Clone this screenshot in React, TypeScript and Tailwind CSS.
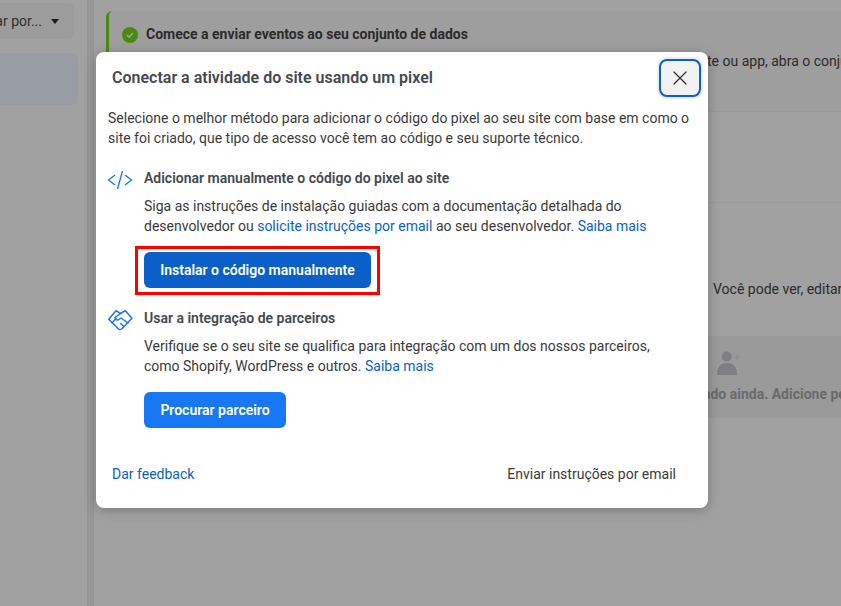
import React from 'react';
import { X } from 'lucide-react';

const font = { fontFamily: 'Roboto, sans-serif' };

function CodeIcon() {
  return (
    <svg width="26" height="20" viewBox="0 0 26 20" fill="none" stroke="#1877f2" strokeWidth="1.3" className="mt-[2px] shrink-0">
      <path d="M8 5 L1.5 10 L8 15" />
      <path d="M15.5 1 L10.5 19" />
      <path d="M18 5 L24.5 10 L18 15" />
    </svg>
  );
}

function HandshakeIcon() {
  return (
    <svg width="26" height="22" viewBox="0 0 26 22" fill="none" stroke="#1877f2" strokeWidth="1.5" strokeLinejoin="round" strokeLinecap="round" className="mt-px shrink-0">
      <path d="M1.7 10.3 L9 1.7 L13.5 4.5 L18.3 1.7 L25 9.3 L14.5 20 Q13 21 11.5 20 Z" />
      <path d="M13.5 4.5 L8 8.5 Q8 11.2 11 11 L14 9 L21 14" />
      <path d="M5 14 L9 9.5" />
      <path d="M17 17.5 L13.5 14.5" />
    </svg>
  );
}

function Background() {
  return (
    <div className="flex h-[606px] w-[841px] overflow-hidden bg-[#a1a1a1]" style={font}>
      <aside className="w-[87px] shrink-0">
        <div className="mt-[3px] flex h-9 w-[74px] items-center justify-end gap-[9px] overflow-hidden rounded-r-md bg-[#9c9c9c] pr-[15px] text-[14px] text-[#2f2f2f]">
          <span className="shrink-0 whitespace-nowrap">ar por...</span>
          <span className="h-0 w-0 shrink-0 border-x-[4.5px] border-t-[5px] border-x-transparent border-t-[#1c1c1c]" />
        </div>
        <div className="mt-[14px] h-[52px] w-[78px] rounded-r-md bg-[#989da5]" />
      </aside>
      <div className="w-[7px] shrink-0 border-x border-[#939393] bg-[#979797]" />
      <main className="min-w-0 flex-1 pl-[12px] pt-[11px]">
        <section className="h-[100px] w-[800px] rounded-l-md border-l-[3px] border-[#4b8a10] bg-[#9e9e9e] pl-[13px] pt-[13px]">
          <div className="flex items-center gap-[8px]">
            <span className="flex h-4 w-4 items-center justify-center rounded-full bg-[#4b8a10]">
              <svg width="10" height="10" viewBox="0 0 10 10" fill="none" stroke="#a1a1a1" strokeWidth="1.6">
                <path d="M2 5.2 L4.2 7.2 L8 3" />
              </svg>
            </span>
            <span className="whitespace-nowrap text-[14px] font-bold text-[#2b2b2b]">Comece a enviar eventos ao seu conjunto de dados</span>
          </div>
          <p className="mt-[6px] whitespace-nowrap pl-[585px] text-[14px] text-[#2b2b2b]">te ou app, abra o conjunto</p>
        </section>
        <div className="h-[92px] w-[800px] border-y border-[#999999]" />
        <section className="w-[800px] pt-[76px]">
          <p className="whitespace-nowrap pl-[607px] text-[14px] text-[#2b2b2b]">Você pode ver, editar</p>
          <div className="mt-[36px] flex h-[82px] flex-col items-start bg-[#9a9a9a] pl-[597px] pt-[15px]">
            <svg width="24" height="24" viewBox="0 0 24 24" fill="#7e7e83" className="ml-[14px]">
              <circle cx="9.7" cy="5.5" r="5" />
              <path d="M0 24 Q0 12 10 12 Q20 12 20 24 Z" />
              <path d="M17 6 H23 M20 3 V9" stroke="#8a8a8e" strokeWidth="1.2" fill="none" />
            </svg>
            <span className="mt-[9px] whitespace-nowrap text-[14px] font-bold text-[#6a6a6a]">ado ainda. Adicione pessoas</span>
          </div>
        </section>
      </main>
    </div>
  );
}

export default function App() {
  return (
    <div className="relative h-[606px] w-[841px] overflow-hidden" style={font}>
      <Background />
      <div className="absolute left-[96px] top-[52px] flex h-[456px] w-[612px] flex-col rounded-lg bg-white text-[14px] leading-[20px] text-[#1c2b33] shadow-[0_2px_12px_rgba(0,0,0,0.25)]">
        <header className="flex items-start justify-between pl-4 pr-[7px] pt-[7px]">
          <h2 className="mt-[9px] text-[16px] font-semibold text-[#444950]">Conectar a atividade do site usando um pixel</h2>
          <button className="flex h-[38px] w-[42px] items-center justify-center rounded-lg border-2 border-[#0a5fcc] bg-[#f2f2f2] ring-2 ring-[#ececec]">
            <X className="h-6 w-6 text-[#333333]" strokeWidth={1.2} />
          </button>
        </header>
        <p className="mt-[11px] px-3 text-[#3a3a3a]">
          Selecione o melhor método para adicionar o código do pixel ao seu site com base em como o site foi criado, que tipo de acesso você tem ao código e seu suporte técnico.
        </p>

        <div className="mt-[20px] flex gap-[11px] pl-[11px] pr-[40px]">
          <div className="h-5 w-[26px] shrink-0"><CodeIcon /></div>
          <div className="min-w-0 flex-1">
            <h3 className="font-semibold text-[#444950]">Adicionar manualmente o código do pixel ao site</h3>
            <p className="mt-2 text-[#3a3a3a]">
              Siga as instruções de instalação guiadas com a documentação detalhada do desenvolvedor ou <span className="text-[#0a5fcc]">solicite instruções por email</span> ao seu desenvolvedor. <span className="text-[#0a5fcc]">Saiba mais</span>
            </p>
            <div className="-ml-[9px] mt-[10px] w-fit border-[3px] border-[#ff0000] px-[6px] pb-[4px] pt-[3px]">
              <button className="block h-9 w-[227px] rounded-md bg-[#0a5fc8] text-center font-semibold text-white">Instalar o código manualmente</button>
            </div>
          </div>
        </div>

        <div className="mt-[13px] flex gap-[11px] pl-[11px] pr-[40px]">
          <div className="h-5 w-[26px] shrink-0"><HandshakeIcon /></div>
          <div className="min-w-0 flex-1">
            <h3 className="font-semibold text-[#444950]">Usar a integração de parceiros</h3>
            <p className="mt-2 text-[#3a3a3a]">
              Verifique se o seu site se qualifica para integração com um dos nossos parceiros, como Shopify, WordPress e outros. <span className="text-[#0a5fcc]">Saiba mais</span>
            </p>
            <button className="mt-[16px] block h-9 w-[142px] rounded-md bg-[#1877f2] text-center font-semibold text-white">Procurar parceiro</button>
          </div>
        </div>

        <footer className="mt-[36px] flex justify-between pl-4 pr-[32px]">
          <span className="text-[#0a5fcc]">Dar feedback</span>
          <span className="text-[#3a3a3a]">Enviar instruções por email</span>
        </footer>
      </div>
    </div>
  );
}
